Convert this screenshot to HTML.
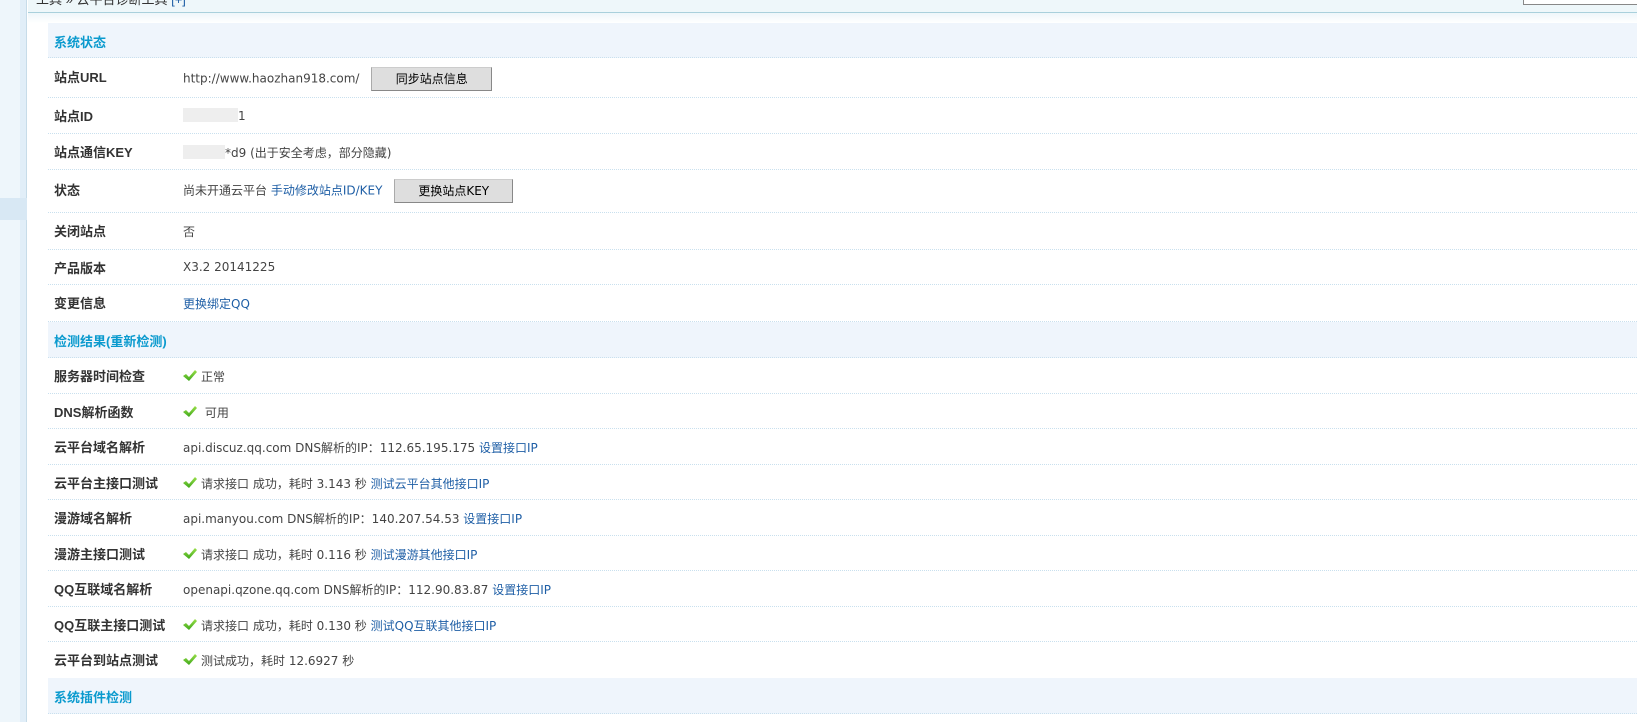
<!DOCTYPE html>
<html><head><meta charset="utf-8"><style>
*{margin:0;padding:0;box-sizing:border-box}
body{width:1637px;height:722px;overflow:hidden;background:#fff;font-family:"Liberation Sans","Noto Sans CJK SC",sans-serif;font-size:13px;color:#333;position:relative}
#side{position:absolute;left:0;top:0;width:20px;height:722px;background:#eef6fb}
#strip{position:absolute;left:20px;top:0;width:7px;height:722px;background:#e1eef8;border-right:1px solid #c7dce9}
#hl{position:absolute;left:0;top:198px;width:27px;height:22px;background:#d8e8f4}
#top{position:absolute;left:28px;top:0;right:0;height:13px;background:#eef7fa;border-bottom:1px solid #a9d0dc;overflow:hidden}
#top span{position:absolute;left:8px;top:-11px;color:#333}
#grad{position:absolute;left:28px;top:13px;right:0;height:10px;background:linear-gradient(#eef6fa,#fff)}
#box{position:absolute;left:1523px;top:-2px;width:120px;height:7px;border:1px solid #888;border-top:none;background:#fff}
.r{position:absolute;left:48px;right:0;border-bottom:1px dotted #c9e0ee}
.h{background:#eff5fc}
.h b{position:absolute;left:6px;color:#0a9ace;font-size:13px}
.l{position:absolute;left:6px;font-weight:bold;color:#333;margin-top:-2px}
.v{position:absolute;left:135px;color:#444;white-space:nowrap;font-family:"DejaVu Sans","Noto Sans CJK SC",sans-serif;font-size:12px}
a{color:#1f5fa6;text-decoration:none}
.btn{display:inline-block;border:1px solid #888;border-left-color:#aaa;border-top-color:#ccc;background:#dedede;color:#000;text-align:center;height:24px;line-height:22px;vertical-align:middle}
.ck{display:inline-block;width:14px;height:12px;vertical-align:-1px;margin-right:4px}
</style></head><body>
<div id="side"></div><div id="strip"></div><div id="hl"></div>
<div id="top"><span>工具 » 云平台诊断工具 <a>[+]</a></span></div>
<div id="grad"></div><div id="box"></div>

<div class="r h" style="top:23px;height:35px"><b style="top:9px">系统状态</b></div>
<div class="r" style="top:58px;height:40px"><span class="l" style="top:11px">站点URL</span><span class="v" style="top:9px">http://www.haozhan918.com/ <span class="btn" style="width:121px;margin-left:8px">同步站点信息</span></span></div>
<div class="r" style="top:98px;height:36px"><span class="l" style="top:10px">站点ID</span><span class="v" style="top:10px"><span style="display:inline-block;width:55px;height:14px;background:#eee;vertical-align:-2px"></span>1</span></div>
<div class="r" style="top:134px;height:36px"><span class="l" style="top:10px">站点通信KEY</span><span class="v" style="top:10px"><span style="display:inline-block;width:42px;height:14px;background:#eee;vertical-align:-2px"></span>*d9 (出于安全考虑，部分隐藏)</span></div>
<div class="r" style="top:170px;height:43px"><span class="l" style="top:12px">状态</span><span class="v" style="top:9px">尚未开通云平台 <a>手动修改站点ID/KEY</a> <span class="btn" style="width:119px;margin-left:8px">更换站点KEY</span></span></div>
<div class="r" style="top:213px;height:37px"><span class="l" style="top:10px">关闭站点</span><span class="v" style="top:10px">否</span></div>
<div class="r" style="top:250px;height:35px"><span class="l" style="top:10px">产品版本</span><span class="v" style="top:10px">X3.2 20141225</span></div>
<div class="r" style="top:285px;height:37px"><span class="l" style="top:10px">变更信息</span><span class="v" style="top:10px"><a>更换绑定QQ</a></span></div>
<div class="r h" style="top:322px;height:36px"><b style="top:9px">检测结果(<a style="color:#0a9ace">重新检测</a>)</b></div>

<svg width="0" height="0" style="position:absolute"><defs><linearGradient id="g" x1="0" y1="0" x2="0" y2="1"><stop offset="0" stop-color="#9be04a"/><stop offset="1" stop-color="#3ea81a"/></linearGradient></defs></svg>

<div class="r" style="top:358px;height:36px"><span class="l" style="top:10px">服务器时间检查</span><span class="v" style="top:10px"><svg class="ck" viewBox="0 0 14 12"><path d="M0 6 L3 4 L6 7 L12 0 L14 2 L6 11 Z" fill="url(#g)"/></svg>正常</span></div>
<div class="r" style="top:394px;height:35px"><span class="l" style="top:10px">DNS解析函数</span><span class="v" style="top:10px"><svg class="ck" viewBox="0 0 14 12"><path d="M0 6 L3 4 L6 7 L12 0 L14 2 L6 11 Z" fill="url(#g)"/></svg> 可用</span></div>
<div class="r" style="top:429px;height:36px"><span class="l" style="top:10px">云平台域名解析</span><span class="v" style="top:10px">api.discuz.qq.com DNS解析的IP：112.65.195.175 <a>设置接口IP</a></span></div>
<div class="r" style="top:465px;height:35px"><span class="l" style="top:10px">云平台主接口测试</span><span class="v" style="top:10px"><svg class="ck" viewBox="0 0 14 12"><path d="M0 6 L3 4 L6 7 L12 0 L14 2 L6 11 Z" fill="url(#g)"/></svg>请求接口 成功，耗时 3.143 秒 <a>测试云平台其他接口IP</a></span></div>
<div class="r" style="top:500px;height:36px"><span class="l" style="top:10px">漫游域名解析</span><span class="v" style="top:10px">api.manyou.com DNS解析的IP：140.207.54.53 <a>设置接口IP</a></span></div>
<div class="r" style="top:536px;height:35px"><span class="l" style="top:10px">漫游主接口测试</span><span class="v" style="top:10px"><svg class="ck" viewBox="0 0 14 12"><path d="M0 6 L3 4 L6 7 L12 0 L14 2 L6 11 Z" fill="url(#g)"/></svg>请求接口 成功，耗时 0.116 秒 <a>测试漫游其他接口IP</a></span></div>
<div class="r" style="top:571px;height:36px"><span class="l" style="top:10px">QQ互联域名解析</span><span class="v" style="top:10px">openapi.qzone.qq.com DNS解析的IP：112.90.83.87 <a>设置接口IP</a></span></div>
<div class="r" style="top:607px;height:35px"><span class="l" style="top:10px">QQ互联主接口测试</span><span class="v" style="top:10px"><svg class="ck" viewBox="0 0 14 12"><path d="M0 6 L3 4 L6 7 L12 0 L14 2 L6 11 Z" fill="url(#g)"/></svg>请求接口 成功，耗时 0.130 秒 <a>测试QQ互联其他接口IP</a></span></div>
<div class="r" style="top:642px;height:36px;border-bottom:none"><span class="l" style="top:10px">云平台到站点测试</span><span class="v" style="top:10px"><svg class="ck" viewBox="0 0 14 12"><path d="M0 6 L3 4 L6 7 L12 0 L14 2 L6 11 Z" fill="url(#g)"/></svg>测试成功，耗时 12.6927 秒</span></div>
<div class="r h" style="top:678px;height:36px"><b style="top:9px">系统插件检测</b></div>
</body></html>
